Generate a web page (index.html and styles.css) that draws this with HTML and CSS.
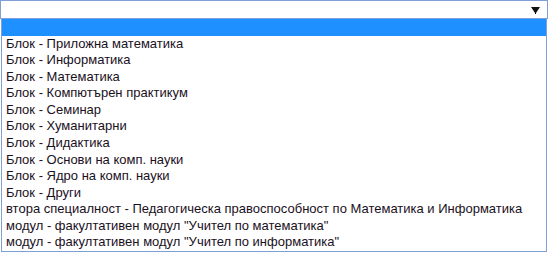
FILE: index.html
```html
<!DOCTYPE html>
<html>
<head>
<meta charset="utf-8">
<link rel="stylesheet" href="styles.css">
</head>
<body>
<div class="page">
  <div class="select">
    <span class="value"></span>
    <svg class="arrow" width="9" height="7" viewBox="0 0 9 7"><polygon points="0,0 9,0 5,6 4,6" fill="#111"/><rect x="4" y="5" width="1" height="2" fill="#111"/></svg>
  </div>
  <ul class="list">
    <li class="opt sel">&nbsp;</li>
    <li class="opt">Блок - Приложна математика</li>
    <li class="opt">Блок - Информатика</li>
    <li class="opt">Блок - Математика</li>
    <li class="opt">Блок - Компютърен практикум</li>
    <li class="opt">Блок - Семинар</li>
    <li class="opt">Блок - Хуманитарни</li>
    <li class="opt">Блок - Дидактика</li>
    <li class="opt">Блок - Основи на комп. науки</li>
    <li class="opt">Блок - Ядро на комп. науки</li>
    <li class="opt">Блок - Други</li>
    <li class="opt">втора специалност - Педагогическа правоспособност по Математика и Информатика</li>
    <li class="opt">модул - факултативен модул "Учител по математика"</li>
    <li class="opt">модул - факултативен модул "Учител по информатика"</li>
  </ul>
</div>
</body>
</html>
```

FILE: styles.css
```css
html, body {
  margin: 0;
  padding: 0;
  background: #ffffff;
}
.page {
  width: 549px;
  height: 255px;
  overflow: hidden;
  font-family: "Liberation Sans", Arial, sans-serif;
  font-size: 13px;
  color: #1a1022;
}
.select {
  box-sizing: border-box;
  width: 548px;
  height: 19px;
  margin-left: 0;
  border: 1px solid #7f9fd6;
  background: #fff;
  display: flex;
  align-items: center;
  justify-content: flex-end;
  padding-right: 7px;
}
.arrow {
  display: block;
  margin-top: 1px;
}
.list {
  list-style: none;
  margin: 0 0 0 1px;
  padding: 0;
  box-sizing: border-box;
  width: 546px;
  border: 1px solid #7f9fd6;
  border-top: none;
  background: #fff;
}
.opt {
  height: 16.57px;
  line-height: 16.57px;
  padding-left: 4px;
  white-space: nowrap;
}
.sel {
  background: #1e90ff;
}
```
